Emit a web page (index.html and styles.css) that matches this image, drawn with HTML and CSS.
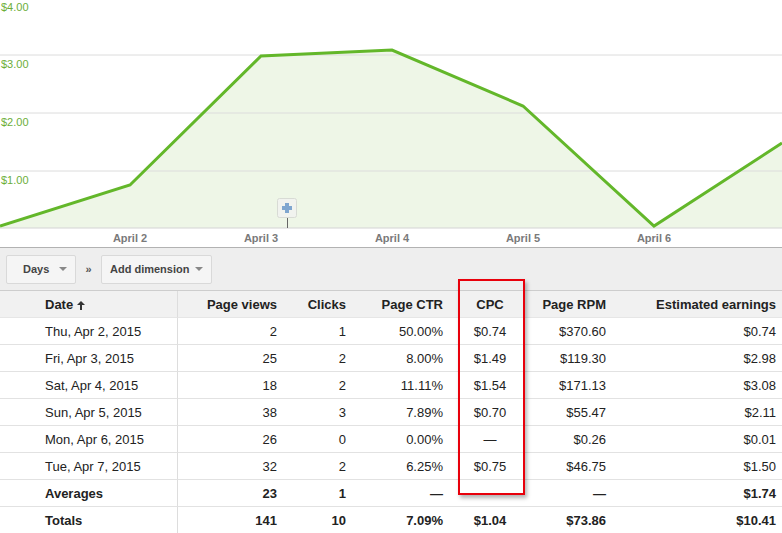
FILE: index.html
```html
<!DOCTYPE html>
<html lang="en">
<head>
    <meta charset="UTF-8">
    <title>Performance report</title>
    <link rel="stylesheet" href="styles.css">
</head>
<body>
    <div class="report">
        <svg class="chart" width="782" height="247" viewBox="0 0 782 247">
            <!-- area under the earnings line -->
            <polygon class="area" points="0,226 130,185 261,56 392,50 523,106 654,226 782,143 782,228 0,228"/>
            <line class="grid" x1="0" y1="55" x2="782" y2="55"/>
            <line class="grid" x1="0" y1="113" x2="782" y2="113"/>
            <line class="grid" x1="0" y1="171" x2="782" y2="171"/>
            <line class="axis" x1="0" y1="228" x2="782" y2="228"/>
            <polyline class="line" points="0,226 130,185 261,56 392,50 523,106 654,226 782,143"/>
            <text class="ylabel" x="1" y="11">$4.00</text>
            <text class="ylabel" x="1" y="68">$3.00</text>
            <text class="ylabel" x="1" y="126">$2.00</text>
            <text class="ylabel" x="1" y="184">$1.00</text>
            <text class="xlabel" x="130" y="242">April 2</text>
            <text class="xlabel" x="261" y="242">April 3</text>
            <text class="xlabel" x="392" y="242">April 4</text>
            <text class="xlabel" x="523" y="242">April 5</text>
            <text class="xlabel" x="654" y="242">April 6</text>
            <!-- annotation marker -->
            <line class="tick" x1="287.5" y1="218" x2="287.5" y2="228"/>
            <rect class="marker" x="277.5" y="198.5" width="19" height="19" rx="2"/>
            <rect class="plus" x="282" y="206" width="10" height="4"/>
            <rect class="plus" x="285" y="203" width="4" height="10"/>
        </svg>

        <div class="toolbar">
            <button class="dropdown days">Days <span class="caret"></span></button>
            <span class="sep">»</span>
            <button class="dropdown">Add dimension <span class="caret"></span></button>
        </div>

        <table class="stats">
            <colgroup>
                <col style="width:178px">
                <col style="width:109px">
                <col style="width:69px">
                <col style="width:97px">
                <col style="width:74px">
                <col style="width:89px">
                <col style="width:166px">
            </colgroup>
            <thead>
                <tr>
                    <th class="date">Date <svg class="sort" width="8" height="9" viewBox="0 0 8 9"><path d="M4 0 L8 4 L5 4 L5 9 L3 9 L3 4 L0 4 Z"/></svg></th>
                    <th>Page views</th>
                    <th>Clicks</th>
                    <th>Page CTR</th>
                    <th class="mid">CPC</th>
                    <th>Page RPM</th>
                    <th>Estimated earnings</th>
                </tr>
            </thead>
            <tbody>
                <tr><td class="date">Thu, Apr 2, 2015</td><td>2</td><td>1</td><td>50.00%</td><td class="mid">$0.74</td><td>$370.60</td><td>$0.74</td></tr>
                <tr><td class="date">Fri, Apr 3, 2015</td><td>25</td><td>2</td><td>8.00%</td><td class="mid">$1.49</td><td>$119.30</td><td>$2.98</td></tr>
                <tr><td class="date">Sat, Apr 4, 2015</td><td>18</td><td>2</td><td>11.11%</td><td class="mid">$1.54</td><td>$171.13</td><td>$3.08</td></tr>
                <tr><td class="date">Sun, Apr 5, 2015</td><td>38</td><td>3</td><td>7.89%</td><td class="mid">$0.70</td><td>$55.47</td><td>$2.11</td></tr>
                <tr><td class="date">Mon, Apr 6, 2015</td><td>26</td><td>0</td><td>0.00%</td><td class="mid">—</td><td>$0.26</td><td>$0.01</td></tr>
                <tr><td class="date">Tue, Apr 7, 2015</td><td>32</td><td>2</td><td>6.25%</td><td class="mid">$0.75</td><td>$46.75</td><td>$1.50</td></tr>
                <tr class="summary"><td class="date">Averages</td><td>23</td><td>1</td><td>—</td><td class="mid"></td><td>—</td><td>$1.74</td></tr>
                <tr class="summary"><td class="date">Totals</td><td>141</td><td>10</td><td>7.09%</td><td class="mid">$1.04</td><td>$73.86</td><td>$10.41</td></tr>
            </tbody>
        </table>

        <div class="highlight"></div>
    </div>
</body>
</html>
```

FILE: styles.css
```css
body {
    margin: 0;
    font-family: "Liberation Sans", Arial, sans-serif;
    font-size: 13px;
    color: #222;
    background-color: #fff;
}
.report {
    position: relative;
    width: 782px;
    height: 533px;
    overflow: hidden;
}
.chart {
    display: block;
}
.area {
    fill: #eef6e7;
}
.grid {
    stroke: #dcdcdc;
    stroke-width: 1;
}
.axis {
    stroke: #d4d4d4;
    stroke-width: 1;
}
.line {
    fill: none;
    stroke: #63b72a;
    stroke-width: 3;
    stroke-linejoin: miter;
}
.ylabel {
    font-size: 11px;
    fill: #6cae38;
}
.xlabel {
    font-size: 11px;
    font-weight: bold;
    fill: #7a7a7a;
    text-anchor: middle;
}
.tick {
    stroke: #666;
    stroke-width: 1;
}
.marker {
    fill: #f1f3ef;
    stroke: #d8dbd5;
    stroke-width: 1;
}
.plus {
    fill: #7fa6cf;
}
.toolbar {
    display: flex;
    align-items: center;
    height: 42px;
    padding-left: 6px;
    background-color: #eee;
    border-top: 1px solid #b2b2b2;
    border-bottom: 1px solid #cdcdcd;
    box-sizing: border-box;
    height: 44px;
}
.dropdown {
    display: flex;
    align-items: center;
    height: 29px;
    padding: 0 8px;
    font-family: inherit;
    font-size: 11px;
    font-weight: bold;
    color: #444;
    background-color: #f5f5f5;
    border: 1px solid #d9d9d9;
    border-radius: 2px;
}
.days {
    width: 70px;
    padding-left: 16px;
    justify-content: space-between;
}
.caret {
    display: inline-block;
    width: 0;
    height: 0;
    margin-left: 6px;
    border-left: 4px solid transparent;
    border-right: 4px solid transparent;
    border-top: 4px solid #888;
}
.sep {
    width: 25px;
    text-align: center;
    font-weight: bold;
    font-size: 11px;
    color: #555;
}
.stats {
    width: 782px;
    table-layout: fixed;
    border-collapse: separate;
    border-spacing: 0;
}
.stats th,
.stats td {
    height: 26px;
    padding: 0 10px 0 0;
    text-align: right;
    white-space: nowrap;
    border-bottom: 1px solid #e2e2e2;
}
.stats th {
    background-color: #f1f1f1;
    font-weight: bold;
    color: #222;
    border-bottom-color: #e6e6e6;
}
.stats th:last-child,
.stats td:last-child {
    padding-right: 6px;
}
.stats .date {
    text-align: left;
    padding-left: 45px;
    border-right: 1px solid #ddd;
}
.stats .mid {
    text-align: center;
    padding: 0;
}
.sort {
    vertical-align: -1px;
    fill: #333;
}
.summary td {
    font-weight: bold;
}
.summary:last-child td {
    border-bottom: none;
}
.highlight {
    position: absolute;
    left: 458px;
    top: 279px;
    width: 63px;
    height: 212px;
    border: 2px solid #e8000b;
    box-shadow: 2px 3px 4px rgba(0, 0, 0, 0.3);
}
```
